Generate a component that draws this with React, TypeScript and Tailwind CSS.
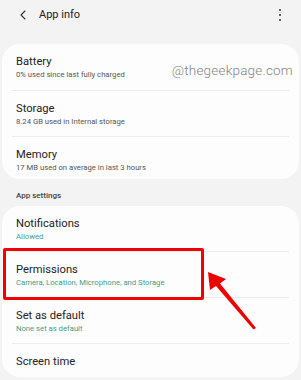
import { ChevronLeft } from "lucide-react";

interface RowProps {
  title: string;
  sub?: string;
  green?: boolean;
  h: string;
  divider?: boolean;
}

function Row({ title, sub, green, h, divider = true }: RowProps) {
  return (
    <div className={`${h} flex flex-col`}>
      {divider && <div className="mx-[10px] border-t border-[#ececec]" />}
      <div className="pl-[14px] pt-[11px]">
        <div className="text-[11.2px] leading-[14px] text-[#222]">{title}</div>
        {sub && (
          <div
            className={`mt-[1px] text-[7.7px] leading-[10px] ${
              green ? "text-[#3f9e88]" : "text-[#555]"
            }`}
          >
            {sub}
          </div>
        )}
      </div>
    </div>
  );
}

export default function App() {
  return (
    <div className="relative w-[301px] h-[380px] overflow-hidden bg-[#f3f3f3] font-['Roboto',sans-serif]">
      {/* Top bar */}
      <div className="h-[30px] flex items-center pl-[15px] pr-[20px]">
        <ChevronLeft size={16} strokeWidth={1.6} className="text-[#333]" />
        <span className="ml-[8px] text-[11px] text-[#222]">App info</span>
        <div className="ml-auto flex flex-col gap-[2.5px]">
          <span className="w-[2.5px] h-[2.5px] rounded-full bg-[#333]" />
          <span className="w-[2.5px] h-[2.5px] rounded-full bg-[#333]" />
          <span className="w-[2.5px] h-[2.5px] rounded-full bg-[#333]" />
        </div>
      </div>

      <div className="h-[14px]" />

      {/* Usage card */}
      <div className="relative mx-[2px] rounded-[18px] bg-[#fdfdfd]">
        <Row h="h-[46px]" title="Battery" sub="0% used since last fully charged" divider={false} />
        <Row h="h-[46px]" title="Storage" sub="8.24 GB used in Internal storage" />
        <Row h="h-[43px]" title="Memory" sub="17 MB used on average in last 3 hours" />
        <div className="absolute right-[6px] top-[16px] text-[13.5px] font-light tracking-[0.2px] text-[#858585]">
          @thegeekpage.com
        </div>
      </div>

      {/* Section label */}
      <div className="h-[27px] pl-[16px] pt-[12px] text-[8px] leading-[10px] font-medium text-[#444]">
        App settings
      </div>

      {/* App settings card */}
      <div className="mx-[2px] rounded-[18px] bg-[#fdfdfd]">
        <Row h="h-[45px]" title="Notifications" sub="Allowed" green divider={false} />
        <Row h="h-[46px]" title="Permissions" sub="Camera, Location, Microphone, and Storage" green />
        <Row h="h-[46px]" title="Set as default" sub="None set as default" green />
        <Row h="h-[34px]" title="Screen time" />
      </div>

      {/* Highlight box */}
      <div className="absolute left-[3px] top-[248px] w-[201px] h-[52px] border-[3px] border-[#f20000] rounded-[2px]" />

      {/* Arrow */}
      <svg className="absolute left-0 top-0" width="301" height="380" viewBox="0 0 301 380">
        <path d="M208 272 L226 279 L220 283.5 L256 328 L253.5 329.5 L216 286 L210 290 Z" fill="#ee0000" />
      </svg>
    </div>
  );
}
